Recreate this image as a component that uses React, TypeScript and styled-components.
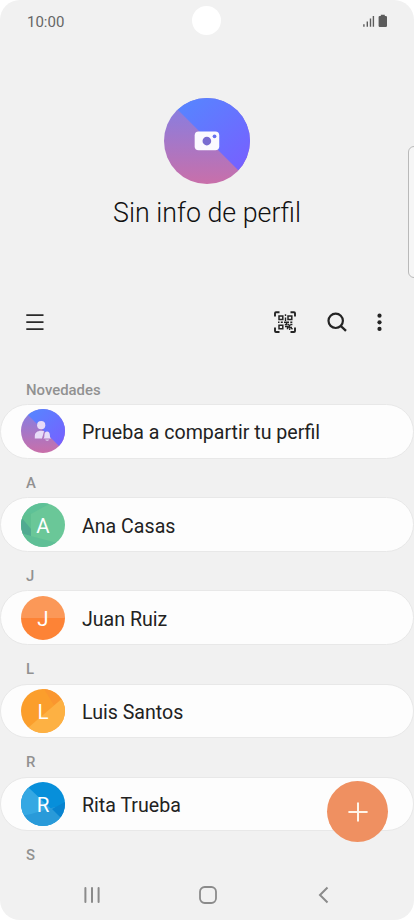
import React from "react";
import styled, { createGlobalStyle } from "styled-components";

const GlobalStyle = createGlobalStyle`
  * { box-sizing: border-box; }
  body { margin: 0; background: #fff; font-family: Roboto, "Liberation Sans", sans-serif; }
  button { border: 0; padding: 0; background: none; font: inherit; color: inherit; }
  svg { display: block; }
`;

const Phone = styled.main`
  position: relative;
  width: 414px;
  height: 920px;
  overflow: hidden;
  display: flex;
  flex-direction: column;
  background: #f1f1f1;
  border-radius: 20px;
`;

const StatusBar = styled.header`
  height: 42px;
  flex: none;
  display: flex;
  align-items: center;
  justify-content: space-between;
  padding: 0 26px 0 27px;
  color: #666;
  font-size: 15px;
`;

const Clock = styled.span`
  padding-top: 1px;
`;

const CameraHole = styled.div`
  position: absolute;
  top: 6px;
  left: 192px;
  width: 29px;
  height: 29px;
  border-radius: 50%;
  background: #fff;
`;

const EdgeHandle = styled.div`
  position: absolute;
  top: 146px;
  right: -6px;
  width: 12px;
  height: 132px;
  border: 1.5px solid #b9b9b9;
  border-radius: 6px;
  background: #f6f6f6;
`;

const Profile = styled.section`
  height: 254px;
  flex: none;
  display: flex;
  flex-direction: column;
  align-items: center;
  padding-top: 55.5px;
`;

const ProfileTitle = styled.h1`
  margin: 11px 0 0;
  color: #111;
  font-size: 26.8px;
  font-weight: 300;
  line-height: 36px;
  white-space: nowrap;
`;

const Toolbar = styled.nav`
  height: 52px;
  flex: none;
  display: flex;
  align-items: center;
  justify-content: space-between;
  padding: 0 32px 0 26px;
`;

const ToolGroup = styled.div`
  display: flex;
  align-items: center;
`;

const IconButton = styled.button<{ $gap?: number }>`
  margin-left: ${(p) => p.$gap ?? 0}px;
`;

const ContactList = styled.div`
  flex: 1;
  min-height: 0;
  overflow: hidden;
  padding-top: 17.4px;
`;

const SectionLabel = styled.h2`
  height: 38.8px;
  margin: 0;
  padding: 15.4px 26px 0;
  color: #919191;
  font-size: 14.9px;
  font-weight: 500;
  line-height: 18px;
`;

const ContactCard = styled.div`
  height: 54.35px;
  display: flex;
  align-items: center;
  gap: 17px;
  padding-left: 20px;
  border: 1px solid #e8e8e8;
  border-radius: 28px;
  background: #fdfdfd;
`;

const ContactName = styled.span`
  padding-top: 4px;
  color: #222;
  font-size: 19.6px;
  line-height: 26px;
  white-space: nowrap;
`;

const AvatarFrame = styled.div<{ $size: number }>`
  display: grid;
  flex: none;
  width: ${(p) => p.$size}px;
  height: ${(p) => p.$size}px;
  overflow: hidden;
  border-radius: 50%;
  > * { grid-area: 1 / 1; }
`;

const Initial = styled.span`
  place-self: center;
  padding-top: 2px;
  color: #fff;
  font-size: 20.5px;
  line-height: 24px;
`;

const AddButton = styled.button`
  position: absolute;
  top: 781.3px;
  left: 327px;
  width: 61px;
  height: 61px;
  border-radius: 50%;
  display: grid;
  place-items: center;
  background: #ef9061;
`;

const NavBar = styled.footer`
  height: 50px;
  flex: none;
  display: flex;
  align-items: center;
  justify-content: space-between;
  padding: 0 85px 0 83px;
`;

const HomeIcon = styled.svg`
  margin-right: 3.5px;
`;

const SharedArt = ({ id }: { id: string }) => (
  <>
    <defs>
      <linearGradient id={`${id}b`} x1="0.2" y1="0" x2="0.9" y2="0.8">
        <stop offset="0" stopColor="#5488ff" />
        <stop offset="1" stopColor="#7562ff" />
      </linearGradient>
      <linearGradient id={`${id}p`} x1="0" y1="0.15" x2="0" y2="1">
        <stop offset="0" stopColor="#8b7dde" />
        <stop offset="1" stopColor="#c96fa9" />
      </linearGradient>
    </defs>
    <path d="M0 0H44V44H0Z" fill={`url(#${id}p)`} />
    <path d="M-1-2H44V43Z" fill={`url(#${id}b)`} />
  </>
);

const ProfileAvatar = () => (
  <svg width="86.5" height="86.5" viewBox="0 0 44 44">
    <SharedArt id="profile" />
    <rect x="15.6" y="17.1" width="12.5" height="9.5" rx="2" fill="#fbf9ff" />
    <circle cx="21.8" cy="21.9" r="2.2" fill="#796bd1" />
    <circle cx="25.7" cy="19.5" r="0.95" fill="#6670ee" />
  </svg>
);

const art: Record<string, React.ReactNode> = {
  share: (
    <>
      <SharedArt id="share" />
      <g fill="#e7dcf8">
        <circle cx="20.2" cy="16.2" r="4.1" />
        <path d="M13.8 29.6V27c0-3.2 2.4-5.3 6.4-5.3 1.2 0 2.2.2 3 .6-.9 1.3-.8 3.7-1.6 5l-.6 2.3Z" />
        <path d="M22.3 29.6c1-.8 1.1-1.7 1.1-3.3 0-2.2 1-3.8 2.7-3.8s2.8 1.6 2.8 3.8c0 1.6.2 2.5 1.3 3.3Z" />
        <path d="M24.2 30.6h4c-.4 1-1.1 1.3-2 1.3s-1.6-.3-2-1.3Z" opacity=".75" />
      </g>
    </>
  ),
  Ana: (
    <>
      <path fill="#6ac798" d="M0 0H44V44H0Z" />
      <path fill="#5ec197" d="M0 0H30L10 11 0 13Z" />
      <path fill="#5fc091" d="M0 13 10 10V34L0 29Z" />
      <path fill="#51aa91" d="M0 14 10 26V33L0 32Z" />
      <path fill="#5fbf96" d="M0 30 10 33 44 42V44H0Z" />
    </>
  ),
  Juan: (
    <>
      <path fill="#fb9858" d="M0 0H44V22H0Z" />
      <path fill="#fd8336" d="M0 22H44V44H0Z" />
    </>
  ),
  Luis: (
    <>
      <path fill="#fb9e2c" d="M0 0H44V44H0Z" />
      <path fill="#fa962f" d="M23 0H44V9L34 18Z" />
      <path fill="#fdb143" d="M44 7V44H2L8 38Z" />
    </>
  ),
  Rita: (
    <>
      <path fill="#078fda" d="M0 0H44V44H0Z" />
      <path fill="#35a8e3" d="M0 0 8 6 44 40V44H0Z" />
      <path fill="#299ad9" d="M10 32 34 25 44 36V44H0V34Z" />
      <path fill="#0883cf" d="M31 27 44 20V40Z" />
    </>
  ),
};

const contacts = [
  { section: "Novedades", name: "Prueba a compartir tu perfil", art: "share" },
  { section: "A", name: "Ana Casas", art: "Ana", initial: "A" },
  { section: "J", name: "Juan Ruiz", art: "Juan", initial: "J" },
  { section: "L", name: "Luis Santos", art: "Luis", initial: "L" },
  { section: "R", name: "Rita Trueba", art: "Rita", initial: "R" },
];

const StatusIcons = () => (
  <svg width="26" height="14" viewBox="0 0 26 14" fill="#5c5c5c">
    <path d="M1.2 10.2h1.4v2.6H1.2zM4.6 7.4H6v5.4H4.6zM7.8 4.5h1.4v8.3H7.8zM10.7 2h1.4v10.8h-1.4z" />
    <path d="M18.8.7h4v1.2h1q1.2 0 1.2 1.2v8.7q0 1.2-1.2 1.2h-6q-1.2 0-1.2-1.2V3.1q0-1.2 1.2-1.2h1Z" />
  </svg>
);

const QrIcon = () => (
  <svg width="24" height="24" viewBox="0 0 24 24" fill="none" stroke="#242424">
    <path strokeWidth="1.9" strokeLinejoin="round" d="M2 6.5V3.2q0-.9 1-.9h3.5M17.5 2.3H21q1 0 1 .9v3.3M22 17.5V21q0 1-1 1h-3.5M6.5 22H3q-1 0-1-1v-3.5" />
    <path strokeWidth="1.5" d="M6 6h3.8v3.5H6zM15 6h3.8v3.5H15zM6 15.2h3.8v3.5H6z" />
    <path strokeWidth="1.4" d="M12.5 4.3V6M12.5 7.5v3.5M5 12.3h1.5M7.8 12.3h2M11 12.3h5M17.3 12.3h2M11.8 14.5h2.6M13.7 12v3.2M15 14l2.2 2.2M17.2 14.5h2.2M12 16.5h2.5v2.7M16 16v1.5h3M16 19.2h1.3M18 17.8l1.5 1.5" />
  </svg>
);

export default function App() {
  return (
    <>
      <GlobalStyle />
      <Phone>
        <StatusBar>
          <Clock>10:00</Clock>
          <StatusIcons />
        </StatusBar>
        <CameraHole />
        <EdgeHandle />
        <Profile>
          <AvatarFrame $size={86.5}><ProfileAvatar /></AvatarFrame>
          <ProfileTitle>Sin info de perfil</ProfileTitle>
        </Profile>
        <Toolbar>
          <IconButton aria-label="Menú">
            <svg width="18" height="18" viewBox="0 0 18 18" stroke="#292929" strokeWidth="1.9">
              <path d="M.3 2.1h17.2M.3 9.1h17.2M.3 16.1h17.2" />
            </svg>
          </IconButton>
          <ToolGroup>
            <IconButton aria-label="Código QR"><QrIcon /></IconButton>
            <IconButton aria-label="Buscar" $gap={30}>
              <svg width="20" height="20" viewBox="0 0 20 20" fill="none" stroke="#242424" strokeWidth="2.2">
                <circle cx="8.7" cy="8.8" r="7.2" />
                <path d="m13.8 14 5.2 4.9" strokeWidth="2.4" />
              </svg>
            </IconButton>
            <IconButton aria-label="Más opciones" $gap={30}>
              <svg width="5" height="20" viewBox="0 0 5 20" fill="#242424">
                <circle cx="2.5" cy="3.7" r="2.1" />
                <circle cx="2.5" cy="10.3" r="2.1" />
                <circle cx="2.5" cy="16.9" r="2.1" />
              </svg>
            </IconButton>
          </ToolGroup>
        </Toolbar>
        <ContactList>
          {contacts.map((c) => (
            <section key={c.name}>
              <SectionLabel>{c.section}</SectionLabel>
              <ContactCard>
                <AvatarFrame $size={44}>
                  <svg width="44" height="44" viewBox="0 0 44 44">{art[c.art]}</svg>
                  {c.initial && <Initial>{c.initial}</Initial>}
                </AvatarFrame>
                <ContactName>{c.name}</ContactName>
              </ContactCard>
            </section>
          ))}
          <SectionLabel>S</SectionLabel>
        </ContactList>
        <AddButton aria-label="Añadir contacto">
          <svg width="20" height="20" viewBox="0 0 20 20" stroke="#fff5e9" strokeWidth="2">
            <path d="M10 .4v19.2M.4 10h19.2" />
          </svg>
        </AddButton>
        <NavBar>
          <svg width="18" height="18" viewBox="0 0 18 18" stroke="#8b8b8b" strokeWidth="2" strokeLinecap="round">
            <path d="M2.4 2v14M9 2v14M15.6 2v14" />
          </svg>
          <HomeIcon width="18" height="18" viewBox="0 0 18 18" fill="none" stroke="#8b8b8b" strokeWidth="1.8">
            <rect x="1" y="1" width="16" height="16" rx="4.7" />
          </HomeIcon>
          <svg width="11" height="18" viewBox="0 0 11 18" fill="none" stroke="#8b8b8b" strokeWidth="2">
            <path d="M9.5 1.5 2 9l7.5 7.5" />
          </svg>
        </NavBar>
      </Phone>
    </>
  );
}
